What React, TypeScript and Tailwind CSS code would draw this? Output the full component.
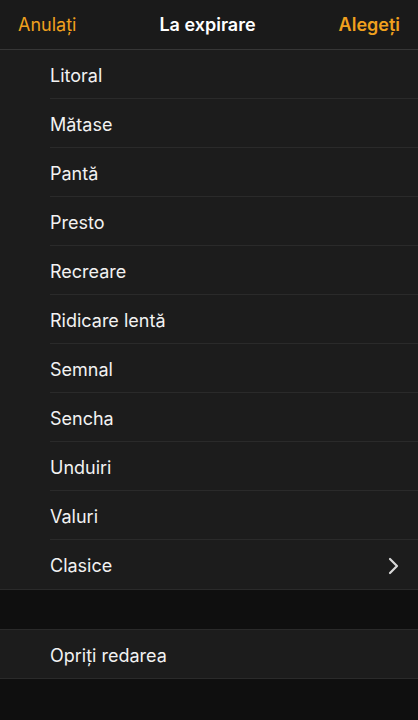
const App = () => {
  const tones = [
    "Litoral",
    "Mătase",
    "Pantă",
    "Presto",
    "Recreare",
    "Ridicare lentă",
    "Semnal",
    "Sencha",
    "Unduiri",
    "Valuri",
  ];

  return (
    <div
      className="min-h-[720px] w-[418px] bg-[#0f0f0f] text-white"
      style={{ fontFamily: "Inter, 'Noto Sans', sans-serif" }}
    >
      {/* Navigation bar */}
      <div className="h-[50px] flex items-center justify-between px-[18px] bg-[#1a1a1a] border-b border-[#363636]">
        <span className="text-[18px] text-[#f0a01e]">Anulați</span>
        <span className="text-[18px] font-semibold text-white">La expirare</span>
        <span className="text-[18px] font-semibold text-[#f0a01e]">Alegeți</span>
      </div>

      {/* Tone list */}
      <div className="bg-[#1c1c1c] border-b border-[#2a2a2a]">
        {tones.map((tone) => (
          <div key={tone} className="pl-[50px]">
            <div className="h-[49px] pt-[2px] flex items-center border-b border-[#2a2a2a] text-[18px] text-[#f2f2f2]">
              {tone}
            </div>
          </div>
        ))}
        <div className="h-[49px] pt-[2px] flex items-center justify-between pl-[50px] pr-[18px] text-[18px] text-[#f2f2f2]">
          <span>Clasice</span>
          <svg
            className="w-[14px] h-[18px] text-[#d8d8d8]"
            viewBox="0 0 14 18"
            fill="none"
            stroke="currentColor"
            strokeWidth={2.2}
            strokeLinecap="round"
            strokeLinejoin="round"
          >
            <path d="M4 2l7 7-7 7" />
          </svg>
        </div>
      </div>

      <div className="h-[39px]" />

      <div className="bg-[#1c1c1c] border-y border-[#2a2a2a]">
        <div className="h-[48px] pt-[2px] flex items-center pl-[50px] text-[18px] text-[#f2f2f2]">
          Opriți redarea
        </div>
      </div>
    </div>
  );
};

export default App;
